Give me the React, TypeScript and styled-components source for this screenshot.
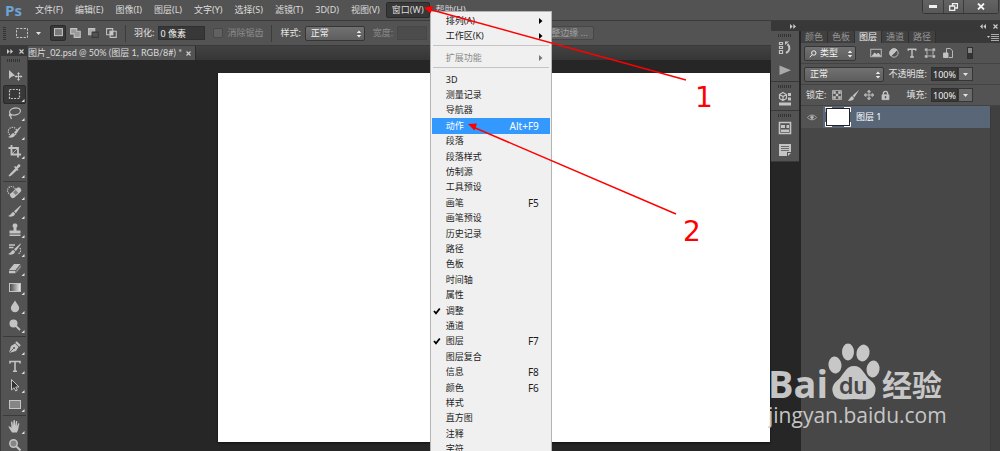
import React from "react";
import styled, { createGlobalStyle, css } from "styled-components";

const GlobalStyle = createGlobalStyle`
  * { box-sizing: border-box; }
  body { margin: 0; background: #262626; }
  button, input, select { font: inherit; color: inherit; margin: 0; }
`;

const App = styled.div`
  position: relative;
  display: flex;
  flex-direction: column;
  height: 100vh;
  overflow: hidden;
  background: #262626;
  color: #dcdcdc;
  font-family: "Noto Sans", "Noto Sans CJK SC", sans-serif;
  font-size: 9px;
  line-height: 14px;
`;

/* ---------- menu bar ---------- */

const MenuBar = styled.header`
  display: flex;
  align-items: center;
  flex: none;
  height: 21px;
  background: #535353;
  border-bottom: 1px solid #3c3c3c;
`;

const Brand = styled.span`
  width: 29px;
  padding-left: 5px;
  color: #6fa3d6;
  font: bold 15px/20px "Open Sans", sans-serif;
`;

const MenuSlot = styled.div`
  position: relative;
`;

const MenuTitle = styled.button<{ $open?: boolean }>`
  display: block;
  height: 16px;
  padding: 0 5px;
  border: 1px solid ${(p) => (p.$open ? "#2a2a2a" : "transparent")};
  border-radius: 2px;
  background: ${(p) => (p.$open ? "#383838" : "transparent")};
  white-space: nowrap;
`;

const WindowButtons = styled.div`
  display: flex;
  align-self: flex-start;
  margin-left: auto;
  margin-right: 1px;
  border: 1px solid #363636;
  border-top: 0;
  border-radius: 0 0 3px 3px;
`;

const WindowButton = styled.button<{ $wide?: boolean }>`
  display: grid;
  place-items: center;
  width: ${(p) => (p.$wide ? 35 : 20)}px;
  height: 13px;
  padding: 0;
  border: 0;
  border-left: 1px solid #3c3c3c;
  background: linear-gradient(#636363, #585858);
  &:first-child { border-left: 0; }
`;

/* ---------- drop-down menu ---------- */

const Dropdown = styled.div`
  position: absolute;
  z-index: 5;
  top: 9px;
  left: 44px;
  width: 122px;
  padding: 1px;
  border: 1px solid #b4b4b4;
  background: #f0f0f0;
  color: #1c1c1c;
`;

const MenuGroup = styled.ul<{ $fill?: boolean }>`
  display: grid;
  grid-auto-rows: ${(p) => (p.$fill ? "1fr" : "15px")};
  ${(p) => p.$fill && css`height: 385px;`}
  margin: 0;
  padding: 0;
  list-style: none;
`;

const MenuRule = styled.hr`
  height: 1px;
  margin: 2px 1px 4px;
  border: 0;
  background: #c4c4c4;
`;

const MenuEntry = styled.button<{ $active?: boolean; $disabled?: boolean }>`
  display: grid;
  grid-template-columns: 14px 1fr auto;
  align-items: center;
  width: 100%;
  height: 100%;
  padding: 0 11px 0 0;
  border: 0;
  background: ${(p) => (p.$active ? "#3399ff" : "transparent")};
  color: ${(p) => (p.$active ? "#fff" : p.$disabled ? "#8a8a8a" : "#1c1c1c")};
  line-height: 12px;
  text-align: left;
  white-space: nowrap;
`;

const Shortcut = styled.span`
  font-size: 10px;
`;

const SubmenuArrow = styled.svg`
  margin-right: -6px;
`;

/* ---------- body columns ---------- */

const Body = styled.div`
  display: flex;
  flex: 1;
  min-height: 0;
`;

const Column = styled.div`
  display: flex;
  flex: 1;
  flex-direction: column;
  min-width: 0;
`;

const OptionsBar = styled.div`
  display: flex;
  align-items: center;
  flex: none;
  height: 25px;
  padding-left: 3px;
  background: #535353;
  border-bottom: 1px solid #3a3a3a;
  white-space: nowrap;
`;

const Grip = styled.i<{ $flat?: boolean }>`
  flex: none;
  width: ${(p) => (p.$flat ? 14 : 3)}px;
  height: ${(p) => (p.$flat ? 3 : 14)}px;
  background: repeating-linear-gradient(${(p) => (p.$flat ? "90deg" : "0deg")}, #333 0 1px, #535353 1px 2px);
`;

const Divider = styled.i`
  width: 1px;
  height: 17px;
  margin: 0 8px;
  background: #3c3c3c;
`;

const CurrentTool = styled.button`
  display: flex;
  align-items: center;
  gap: 8px;
  width: 44px;
  padding: 0 0 0 10px;
  border: 0;
  background: none;
`;

const Gap = styled.span<{ $w: number }>`
  flex: none;
  width: ${(p) => p.$w}px;
`;

const Modes = styled.div`
  display: flex;
  width: 67px;
`;

const ModeButton = styled.button<{ $active?: boolean }>`
  display: grid;
  place-items: center;
  flex: none;
  width: ${(p) => (p.$active ? 16 : 18)}px;
  height: 16px;
  padding: 0;
  border: ${(p) => (p.$active ? "1px solid #2b2b2b" : "0")};
  border-radius: 2px;
  background: ${(p) => (p.$active ? "#383838" : "transparent")};
`;

const Label = styled.label<{ $dim?: boolean }>`
  display: flex;
  align-items: center;
  gap: 4px;
  color: ${(p) => (p.$dim ? "#8c8c8c" : "#e4e4e4")};
`;

const Field = styled.input<{ $w: number; $dim?: boolean }>`
  width: ${(p) => p.$w}px;
  height: 14px;
  padding: 0 1px;
  border: 1px solid ${(p) => (p.$dim ? "#474747" : "#303030")};
  background: ${(p) => (p.$dim ? "#4c4c4c" : "#383838")};
  color: #f0f0f0;
  line-height: 12px;
`;

const Tick = styled.input`
  appearance: none;
  width: 10px;
  height: 10px;
  border: 1px solid #484848;
  border-radius: 2px;
  background: #616161;
`;

const PickerBox = styled.span<{ $w: number }>`
  position: relative;
  display: flex;
  width: ${(p) => p.$w}px;
  height: 15px;
`;

const PickerSelect = styled.select<{ $inset: number }>`
  appearance: none;
  width: 100%;
  padding: 0 0 0 ${(p) => p.$inset}px;
  border: 1px solid #363636;
  border-radius: 2px;
  background: linear-gradient(#717171, #5e5e5e);
  color: #f2f2f2;
  line-height: 12px;
`;

const PickerMark = styled.svg<{ $start?: boolean }>`
  position: absolute;
  top: 4px;
  ${(p) => (p.$start ? "left: 5px;" : "right: 3px;")}
  pointer-events: none;
`;

const PlainButton = styled.button`
  height: 14px;
  margin-left: 109px;
  padding: 0 5px;
  border: 1px solid #474747;
  border-radius: 2px;
  background: #5e5e5e;
  color: #a0a0a0;
  line-height: 12px;
`;

const Main = styled.div`
  display: flex;
  flex: 1;
  min-height: 0;
`;

const ToolPanel = styled.aside`
  display: flex;
  flex-direction: column;
  align-items: center;
  flex: none;
  width: 28px;
  overflow: hidden;
  background: #535353;
  border-left: 1px solid #3a3a3a;
  border-right: 1px solid #3a3a3a;
`;

const ToolHeader = styled.div`
  display: flex;
  align-items: center;
  justify-content: space-between;
  align-self: stretch;
  flex: none;
  height: 10px;
  margin-bottom: 3px;
  padding: 0 3px 0 6px;
  background: #383838;
`;

const ToolList = styled.div`
  display: flex;
  flex-direction: column;
  margin-top: 4px;
`;

const ToolButton = styled.button<{ $active?: boolean }>`
  display: grid;
  place-items: center;
  flex: none;
  width: 23px;
  height: 19px;
  padding: 0;
  border: 1px solid ${(p) => (p.$active ? "#2b2b2b" : "transparent")};
  border-radius: 2px;
  background: ${(p) => (p.$active ? "#383838" : "transparent")};
`;

const ToolRule = styled.i`
  height: 1px;
  margin: 1px 0;
  background: #3a3a3a;
`;

const DocumentArea = styled.main`
  display: flex;
  flex: 1;
  flex-direction: column;
  min-width: 0;
`;

const TabStrip = styled.div`
  display: flex;
  flex: none;
  height: 14px;
  background: linear-gradient(#424242, #363636);
`;

const DocumentTab = styled.div`
  display: flex;
  align-items: center;
  gap: 4px;
  padding-right: 4px;
  background: #535353;
  border-right: 1px solid #2c2c2c;
  font-family: Lato, "Noto Sans CJK SC", sans-serif;
  white-space: nowrap;
`;

const CloseButton = styled.button`
  display: grid;
  place-items: center;
  padding: 0;
  border: 0;
  background: none;
`;

const Workspace = styled.div`
  display: flex;
  flex: 1;
  padding: 13px 1px 9px 190px;
`;

const Canvas = styled.div`
  flex: 1;
  background: #fff;
  box-shadow: 0 1px 2px #111;
`;

/* ---------- right dock ---------- */

const Dock = styled.aside`
  display: flex;
  flex-direction: column;
  flex: none;
  width: 229px;
`;

const DockHeader = styled.div`
  display: flex;
  align-items: center;
  gap: 7px;
  flex: none;
  height: 10px;
  padding: 0 2px 0 19px;
  background: #383838;
`;

const Spacer = styled.span`
  flex: 1;
`;

const DockBody = styled.div`
  display: flex;
  flex: 1;
  gap: 2px;
  min-height: 0;
`;

const IconStrip = styled.div`
  align-self: flex-start;
  width: 28px;
  background: #535353;
`;

const IconGroup = styled.div`
  display: flex;
  flex-direction: column;
  align-items: center;
  padding-top: 3px;
  border-bottom: 1px solid #383838;
`;

const StripButton = styled.button`
  display: grid;
  place-items: center;
  width: 24px;
  height: 22px;
  padding: 0;
  border: 0;
  background: none;
`;

const Panel = styled.section`
  display: flex;
  flex: 1;
  flex-direction: column;
  min-width: 0;
  background: #535353;
`;

const PanelTabs = styled.div`
  display: flex;
  align-items: stretch;
  flex: none;
  height: 12px;
  background: #393939;
`;

const PanelTab = styled.button<{ $active?: boolean }>`
  width: 27px;
  padding: 0;
  border: 0;
  border-right: 1px solid #303030;
  background: ${(p) => (p.$active ? "#535353" : "#404040")};
  color: ${(p) => (p.$active ? "#f0f0f0" : "#969696")};
  line-height: 12px;
`;

const PanelRow = styled.div`
  display: flex;
  align-items: center;
  flex: none;
  height: 21px;
  padding-left: 3px;
  border-bottom: 1px solid #434343;
  white-space: nowrap;
`;

const FilterIcons = styled.div`
  display: flex;
  gap: 4px;
  margin-left: 13px;
`;

const LockIcons = styled.div`
  display: flex;
  gap: 2px;
  margin-left: 4px;
`;

const IconButton = styled.button`
  display: grid;
  place-items: center;
  width: 14px;
  height: 14px;
  padding: 0;
  border: 0;
  background: none;
`;

const MenuButton = styled(IconButton)`
  height: 12px;
`;

const Toggle = styled.input`
  appearance: none;
  width: 6px;
  height: 12px;
  margin: 0 0 0 12px;
  border: 1px solid #303030;
  background: linear-gradient(#888 0 50%, #333 50%);
`;

const Percent = styled.div`
  display: flex;
  margin-left: auto;
  margin-right: 27px;
`;

const PercentDrop = styled.button`
  display: grid;
  place-items: center;
  width: 15px;
  height: 14px;
  padding: 0;
  border: 1px solid #363636;
  background: #6a6a6a;
`;

const LockLabel = styled.span`
  padding-left: 2px;
  color: #e4e4e4;
`;

const LayerWell = styled.div`
  display: flex;
  flex: 1;
  background: #404040;
`;

const LayerArea = styled.div`
  flex: 1;
  margin-right: 9px;
  border-right: 1px solid #3a3a3a;
  background: #474747;
`;

const LayerRow = styled.div`
  display: flex;
  align-items: center;
  height: 22px;
  background: #596678;
  color: #fff;
`;

const EyeButton = styled.button`
  display: grid;
  place-items: center;
  align-self: stretch;
  width: 22px;
  padding: 0;
  border: 0;
  background: #535353;
`;

const Thumb = styled.svg`
  margin: 0 5px 0 2px;
`;

/* ---------- overlays ---------- */

const Annotations = styled.svg`
  position: absolute;
  z-index: 10;
  top: 0;
  left: 0;
  pointer-events: none;
`;

const Watermark = styled.svg`
  position: absolute;
  z-index: 9;
  right: 52px;
  bottom: 16px;
  pointer-events: none;
`;

/* ---------- icons ---------- */

const C = "#c4c4c4";

const Glyph = ({ children, size = 16 }: { children: React.ReactNode; size?: number }) => (
  <svg width={size} height={size} viewBox="0 0 16 16" fill="none" stroke={C} strokeWidth="1.2">
    {children}
  </svg>
);

const Cross = () => (
  <svg width="5" height="5" viewBox="0 0 5 5" stroke="#d0d0d0" strokeWidth="1.1">
    <path d="M.5.5l4 4M4.5.5l-4 4" />
  </svg>
);

const Chevrons = ({ left = false }: { left?: boolean }) => (
  <svg width="6" height="5" viewBox="0 0 6 5" fill="#c8c8c8">
    {left ? <path d="M2.7 0v5L0 2.5zM6 0v5L3.3 2.5z" /> : <path d="M0 0v5l2.7-2.5zM3.3 0v5L6 2.5z" />}
  </svg>
);

const Down = () => (
  <svg width="5" height="3" viewBox="0 0 5 3" fill="#e4e4e4">
    <path d="M0 0h5L2.5 3z" />
  </svg>
);

const Tool = ({ label, active, plain, children }: { label: string; active?: boolean; plain?: boolean; children: React.ReactNode }) => (
  <ToolButton $active={active} aria-label={label}>
    <svg width="21" height="17" viewBox="0 0 21 17" fill="none" stroke={C} strokeWidth="1.2">
      {children}
      {!plain && <path d="M20.5 13v3h-3z" fill="#e0e0e0" stroke="none" />}
    </svg>
  </ToolButton>
);

const brush = <path d="M16.5 2.5L10 8.3l1.8 1.900L17 3zM9.400 8.900c-2 .2-2 3-5.400 4.100 3.500 1.500 7 .2 7-2.400z" fill={C} stroke="none" />;

const Picker = ({ w, value, label, search }: { w: number; value: string; label: string; search?: boolean }) => (
  <PickerBox $w={w}>
    <PickerSelect $inset={search ? 15 : 5} aria-label={label} defaultValue={value}>
      <option>{value}</option>
    </PickerSelect>
    <PickerMark width="6" height="8" viewBox="0 0 6 8" fill="#eee">
      <path d="M3 .5L5.200 3H.8zM3 7.500L5.200 5H.8z" />
    </PickerMark>
    {search && (
      <PickerMark $start width="8" height="8" viewBox="0 0 8 8" fill="none" stroke="#eee">
        <circle cx="4.800" cy="3" r="2.200" />
        <path d="M3.200 4.700L.8 7.300" />
      </PickerMark>
    )}
  </PickerBox>
);

const menus = ["文件(F)", "编辑(E)", "图像(I)", "图层(L)", "文字(Y)", "选择(S)", "滤镜(T)", "3D(D)", "视图(V)"];

const panels: { name: string; keys?: string; checked?: boolean; active?: boolean }[] = [
  { name: "3D" },
  { name: "测量记录" },
  { name: "导航器" },
  { name: "动作", keys: "Alt+F9", active: true },
  { name: "段落" },
  { name: "段落样式" },
  { name: "仿制源" },
  { name: "工具预设" },
  { name: "画笔", keys: "F5" },
  { name: "画笔预设" },
  { name: "历史记录" },
  { name: "路径" },
  { name: "色板" },
  { name: "时间轴" },
  { name: "属性" },
  { name: "调整", checked: true },
  { name: "通道" },
  { name: "图层", keys: "F7", checked: true },
  { name: "图层复合" },
  { name: "信息", keys: "F8" },
  { name: "颜色", keys: "F6" },
  { name: "样式" },
  { name: "直方图" },
  { name: "注释" },
  { name: "字符" },
];

const Sub = ({ name, disabled }: { name: string; disabled?: boolean }) => (
  <li>
    <MenuEntry $disabled={disabled}>
      <span />
      <span>{name}</span>
      <SubmenuArrow width="4" height="6" viewBox="0 0 4 6" fill={disabled ? "#777" : "#000"}>
        <path d="M0 0l3.500 3L0 6z" />
      </SubmenuArrow>
    </MenuEntry>
  </li>
);

const WindowMenu = () => (
  <Dropdown>
    <MenuGroup>
      <Sub name="排列(A)" />
      <Sub name="工作区(K)" />
    </MenuGroup>
    <MenuRule />
    <MenuGroup>
      <Sub name="扩展功能" disabled />
    </MenuGroup>
    <MenuRule />
    <MenuGroup $fill>
      {panels.map((p) => (
        <li key={p.name}>
          <MenuEntry $active={p.active}>
            {p.checked ? (
              <svg width="9" height="8" viewBox="0 0 9 8" fill="none" stroke="#000" strokeWidth="1.8">
                <path d="M2 4l2 2.300L7.800 1.500" />
              </svg>
            ) : (
              <span />
            )}
            <span>{p.name}</span>
            <Shortcut>{p.keys}</Shortcut>
          </MenuEntry>
        </li>
      ))}
    </MenuGroup>
  </Dropdown>
);

const Tools = () => (
  <ToolPanel>
    <ToolHeader>
      <Chevrons />
      <CloseButton aria-label="关闭工具"><Cross /></CloseButton>
    </ToolHeader>
    <Grip $flat />
    <ToolList>
      <Tool label="移动" plain>
        <path d="M5 3v9l2.400-2.300L11 8.500z" fill={C} stroke="none" />
        <path d="M14.500 6v7M11 9.500h7" />
        <path d="M14.500 5l1.500 2h-3zM14.500 14l1.500-2h-3zM10.500 9.500l2-1.500v3zM18.500 9.500l-2-1.500v3z" fill={C} stroke="none" />
      </Tool>
      <Tool label="选框" active>
        <rect x="5.500" y="3.500" width="10" height="9" strokeDasharray="2 1.200" />
      </Tool>
      <Tool label="套索">
        <ellipse cx="11" cy="6.500" rx="5.500" ry="3.500" transform="rotate(-12 11 6.500)" />
        <path d="M6.500 9c-2 .5-1 2.600.3 2 1.200-.6-.2-2-1-1.200M6.500 11.500l1 2.500" />
      </Tool>
      <Tool label="快速选择">
        <circle cx="8.500" cy="7.500" r="4.200" strokeDasharray="1.300 1" />
        {brush}
      </Tool>
      <Tool label="裁剪">
        <path d="M7.500 2v9.500H17M4.500 5h9.500v9.500" strokeWidth="1.800" />
        <path d="M8 11l6-6" strokeWidth=".8" />
      </Tool>
      <Tool label="吸管">
        <path d="M12 6.500l-5.500 5.500L5 14l2-1 5.800-5.500" strokeWidth="1.100" />
        <path d="M10 5l1-1 1.300 1 1.700-2.300c1.300-1.300 3.300.6 2 2L13.500 6.500l1 1.300-1 1z" fill={C} stroke="none" />
      </Tool>
      <ToolRule />
      <Tool label="修复画笔">
        <circle cx="7.500" cy="6.500" r="4" strokeDasharray="1.200 1" />
        <rect x="5" y="6" width="13" height="5.500" rx="2.500" transform="rotate(-42 11.500 8.500)" fill={C} stroke="none" />
        <rect x="9.800" y="6.800" width="3.600" height="3.600" transform="rotate(-42 11.500 8.500)" fill="#808080" stroke="none" />
      </Tool>
      <Tool label="画笔">{brush}</Tool>
      <Tool label="仿制图章">
        <path d="M11 1.500a2.200 2.200 0 0 1 1.500 4v3h4v3h-11v-3h4v-3a2.200 2.200 0 0 1 1.500-4zM5.500 12.500h11V14h-11z" fill={C} stroke="none" />
      </Tool>
      <Tool label="历史记录画笔">
        {brush}
        <path d="M5 4h6M5 6.500h4.500" strokeWidth="1.500" />
        <path d="M16 7c1.500 3 0 5.500-2.500 6" strokeDasharray="1.500 1" />
      </Tool>
      <Tool label="橡皮擦">
        <path d="M5 10l5-6h6.500l-5 6zM5 10.800h6.500v2.400H5z" fill={C} stroke="none" />
        <path d="M12.300 10.300l4.500-5.400v2.700l-4.500 5.400z" fill="#8d8d8d" stroke="none" />
      </Tool>
      <Tool label="渐变">
        <defs>
          <linearGradient id="fade"><stop stopColor="#444" /><stop offset="1" stopColor="#eee" /></linearGradient>
        </defs>
        <rect x="5.500" y="4.500" width="11" height="8" fill="url(#fade)" strokeWidth="1" />
      </Tool>
      <Tool label="模糊">
        <path d="M11 2.500c1.500 3 4.200 5 4.200 7.600a4.200 4.200 0 0 1-8.400 0C6.800 7.500 9.500 5.500 11 2.500z" fill={C} stroke="none" />
      </Tool>
      <Tool label="减淡">
        <circle cx="9.500" cy="6.500" r="4" fill={C} stroke="none" />
        <path d="M12 9l4 4" strokeWidth="1.800" />
      </Tool>
      <ToolRule />
      <Tool label="钢笔">
        <path d="M5 14l2-7 4-2.500 3.500 3.500L12 12z" fill={C} stroke="none" />
        <path d="M5 14l4.500-4.500" stroke="#555" strokeWidth=".9" />
        <circle cx="10" cy="9" r="1" fill="#555" stroke="none" />
        <path d="M12 3l4 4" strokeWidth="2.200" />
      </Tool>
      <Tool label="文字">
        <path d="M6 5.500V3.500h10v2M11 3.500v9.500M9 13.200h4" strokeWidth="1.600" />
      </Tool>
      <Tool label="路径选择">
        <path d="M7.500 2.500v10.500l2.500-2.300 1.700 3.300 1.600-.8-1.600-3.200h3.300z" fill="#333" strokeWidth="1" />
      </Tool>
      <Tool label="矩形">
        <rect x="5.500" y="4.500" width="11" height="8" fill="#858585" strokeWidth="1" />
      </Tool>
      <ToolRule />
      <Tool label="抓手">
        <path d="M8 14.500C6.500 12 5 10 4.500 8.500c.8-.8 1.800.3 3 1.500L7 4c.8-1 1.400-.2 1.500.5L9 8l.5-5.500c.7-1 1.400-.4 1.500.3V8l1-4.800c.8-.7 1.400 0 1.300.6l-.5 4.700 1.400-3c.8-.5 1.400.1 1.100.8-.7 2-.8 5.600-2.300 8.200z" fill={C} stroke="none" />
      </Tool>
      <Tool label="缩放" plain>
        <circle cx="9.500" cy="6.500" r="3.700" fill="#858585" strokeWidth="1.500" />
        <path d="M12.500 9.500l4 4" strokeWidth="2" />
      </Tool>
    </ToolList>
  </ToolPanel>
);

const ToolOptions = () => (
  <OptionsBar>
    <Grip />
    <CurrentTool aria-label="选框工具">
      <svg width="12" height="10" viewBox="0 0 12 10" fill="none" stroke={C}>
        <rect x=".5" y=".5" width="11" height="9" strokeDasharray="2.300 1.300" />
      </svg>
      <Down />
    </CurrentTool>
    <Modes>
      <ModeButton $active aria-label="新选区">
        <Glyph size={14}><rect x="4" y="3" width="9" height="8" fill="#777" /></Glyph>
      </ModeButton>
      <ModeButton aria-label="添加到选区">
        <Glyph size={14}><path d="M3 3h7v3h4v7H7V9H3z" fill="#9a9a9a" /></Glyph>
      </ModeButton>
      <ModeButton aria-label="从选区减去">
        <Glyph size={14}><path d="M3 10V3h7v3H6v4z" fill="#aaa" /><path d="M7 7h7v6H7z" stroke="#3a3a3a" /></Glyph>
      </ModeButton>
      <ModeButton aria-label="与选区交叉">
        <Glyph size={14}><path d="M3 3h7v7H3zM7 6h7v7H7z" /><path d="M7 6h3v4H7z" fill="#ccc" /></Glyph>
      </ModeButton>
    </Modes>
    <Divider />
    <Label>羽化:<Field $w={47} defaultValue="0 像素" /></Label>
    <Gap $w={8} />
    <Label $dim><Tick type="checkbox" />消除锯齿</Label>
    <Divider />
    <Label as="span">样式:<Picker w={60} value="正常" label="样式" /></Label>
    <Gap $w={8} />
    <Label $dim>宽度:<Field $w={30} $dim /></Label>
    <PlainButton>调整边缘 ...</PlainButton>
  </OptionsBar>
);

const LayersPanel = () => (
  <Panel>
    <PanelTabs>
      <PanelTab>颜色</PanelTab>
      <PanelTab>色板</PanelTab>
      <PanelTab $active>图层</PanelTab>
      <PanelTab>通道</PanelTab>
      <PanelTab>路径</PanelTab>
      <Spacer />
      <MenuButton aria-label="面板菜单">
        <svg width="12" height="7" viewBox="0 0 12 7" stroke="#aaa">
          <path d="M4 .5h8M4 2.500h8M4 4.500h8M4 6.500h8" />
          <path d="M0 2h3L1.500 4z" fill="#ccc" stroke="none" />
        </svg>
      </MenuButton>
    </PanelTabs>
    <PanelRow>
      <Picker w={52} value="类型" label="滤镜类型" search />
      <FilterIcons>
        <IconButton aria-label="像素图层"><Glyph size={12}><rect x="1" y="3" width="14" height="10" /><path d="M3 12l3-4 3 2 2-2 3 4z" fill={C} /></Glyph></IconButton>
        <IconButton aria-label="调整图层"><Glyph size={12}><circle cx="8" cy="8" r="5.500" /><path d="M4 12A5.500 5.500 0 0 1 12 4z" fill={C} /></Glyph></IconButton>
        <IconButton aria-label="文字图层"><Glyph size={12}><path d="M3 5V3h10v2M8 3v10M5.500 13.300h5" strokeWidth="1.900" /></Glyph></IconButton>
        <IconButton aria-label="形状图层"><Glyph size={12}><path d="M4 4h8v8H4z" /><path d="M1 1.500h4v4H1zM11 1.500h4v4h-4zM1 10.500h4v4H1zM11 10.500h4v4h-4z" fill={C} stroke="#535353" strokeWidth=".6" /></Glyph></IconButton>
        <IconButton aria-label="智能对象"><Glyph size={12}><path d="M6 9V2h5l3 3v9H9" /><path d="M2 8h6v6H2z" fill={C} /></Glyph></IconButton>
      </FilterIcons>
      <Toggle type="checkbox" aria-label="图层过滤" />
    </PanelRow>
    <PanelRow>
      <Picker w={80} value="正常" label="混合模式" />
      <Percent>
        <Label>不透明度:<Field $w={27} defaultValue="100%" /></Label>
        <PercentDrop aria-label="不透明度滑块"><Down /></PercentDrop>
      </Percent>
    </PanelRow>
    <PanelRow>
      <LockLabel>锁定:</LockLabel>
      <LockIcons>
        <IconButton aria-label="锁定透明像素"><Glyph size={10}><rect x="1" y="1" width="14" height="14" /><path d="M2 2h4v4H2zM10 2h4v4h-4zM6 6h4v4H6zM2 10h4v4H2zM10 10h4v4h-4z" fill={C} stroke="none" /></Glyph></IconButton>
        <IconButton aria-label="锁定图像像素"><Glyph size={13}><path d="M15 1L7 8l2 2.500zM6.500 9C4 9 4 12.500 1 14c4 1 7.500 0 7.500-3z" fill={C} stroke="none" /></Glyph></IconButton>
        <IconButton aria-label="锁定位置"><Glyph size={12}><path d="M8 2v12M2 8h12M6 4l2-2.500L10 4zM6 12l2 2.500 2-2.500zM4 6L1.500 8 4 10zM12 6l2.500 2-2.500 2z" /></Glyph></IconButton>
        <IconButton aria-label="全部锁定"><Glyph size={11}><path d="M5 7V5a3 3 0 0 1 6 0v2" strokeWidth="2" /><path d="M3 7h10v7H3z" fill={C} /><path d="M8 9v3" stroke="#444" strokeWidth="2" /></Glyph></IconButton>
      </LockIcons>
      <Percent>
        <Label>填充:<Field $w={27} defaultValue="100%" /></Label>
        <PercentDrop aria-label="填充滑块"><Down /></PercentDrop>
      </Percent>
    </PanelRow>
    <LayerWell>
      <LayerArea>
        <LayerRow>
          <EyeButton aria-label="图层可见性">
            <svg width="10" height="7" viewBox="0 0 10 7" fill="none" stroke="#aaa">
              <path d="M.5 3.500C2.500.3 7.500.3 9.500 3.500c-2 3-7 3-9 0z" />
              <circle cx="5" cy="3.300" r="1.300" fill="#bbb" />
            </svg>
          </EyeButton>
          <Thumb width="26" height="20" viewBox="0 0 26 20" fill="none">
            <rect x="1.500" y="1.500" width="23" height="17" fill="#fff" stroke="#222" />
            <path d="M0 5V.5h7M19 .5h6.500V5M25.500 15v4.500H19M7 19.500H.5V15" stroke="#fff" />
          </Thumb>
          图层 1
        </LayerRow>
      </LayerArea>
    </LayerWell>
  </Panel>
);

const RightDock = () => (
  <Dock>
    <DockHeader>
      <Chevrons />
      <Spacer />
      <Chevrons left />
      <CloseButton aria-label="关闭面板"><Cross /></CloseButton>
    </DockHeader>
    <DockBody>
      <IconStrip>
        <IconGroup>
          <Grip $flat />
          <StripButton aria-label="历史记录">
            <Glyph><path d="M2.500 2.500h3v2h-3zM2.500 6.500h3v2h-3zM2.500 10.500h3v3h-3z" /><path d="M9 13c4-2 4.500-6 1.500-9" strokeWidth="2" /><path d="M8 5V1.500h4z" fill={C} stroke="none" /></Glyph>
          </StripButton>
          <StripButton aria-label="动作"><Glyph><path d="M2.500 3.500v9.500L14 8.200z" fill="#aaa" stroke="none" /></Glyph></StripButton>
        </IconGroup>
        <IconGroup>
          <Grip $flat />
          <StripButton aria-label="属性">
            <Glyph><path d="M6 1.500l3.500 2v4L6 9.500l-3.500-2v-4zM2.500 3.500L6 5.500l3.500-2M6 5.500v4" /><path d="M11 2h3v3h-3zM11 6.500h3v3h-3zM2 11.500h12v3H2z" fill={C} stroke="none" /></Glyph>
          </StripButton>
        </IconGroup>
        <IconGroup>
          <Grip $flat />
          <StripButton aria-label="信息">
            <Glyph><path d="M2.500 2.500h11v11h-11z" strokeWidth="1.600" /><path d="M4 5h4v3H4zM9.500 5H12v3H9.500zM4 9.500h8V12H4z" fill={C} stroke="none" /></Glyph>
          </StripButton>
          <StripButton aria-label="注释">
            <Glyph><path d="M2 2h12v8h-4v4H2z" fill={C} stroke="none" /><path d="M11 11h3l-3 3z" fill={C} stroke="none" /><path d="M4 4.500h8M4 6.500h8M4 8.500h8" stroke="#555" strokeWidth=".8" /></Glyph>
          </StripButton>
        </IconGroup>
      </IconStrip>
      <LayersPanel />
    </DockBody>
  </Dock>
);

export default function Editor() {
  return (
    <App>
      <GlobalStyle />
      <MenuBar>
        <Brand>Ps</Brand>
        {menus.map((m) => (
          <MenuTitle key={m}>{m}</MenuTitle>
        ))}
        <MenuSlot>
          <MenuTitle $open>窗口(W)</MenuTitle>
          <WindowMenu />
        </MenuSlot>
        <MenuTitle>帮助(H)</MenuTitle>
        <WindowButtons>
          <WindowButton aria-label="最小化">
            <svg width="8" height="3" viewBox="0 0 8 3"><path d="M0 0h8v3H0z" fill="#f0f0f0" /></svg>
          </WindowButton>
          <WindowButton aria-label="还原">
            <svg width="9" height="8" viewBox="0 0 9 8" fill="none" stroke="#f0f0f0" strokeWidth="1.300"><path d="M3.500 2.500v-2h5v4.500h-2M.7 3h5v4.300h-5z" /></svg>
          </WindowButton>
          <WindowButton $wide aria-label="关闭">
            <svg width="8" height="7" viewBox="0 0 8 7" stroke="#f4f4f4" strokeWidth="1.800"><path d="M1 .5l6 6M7 .5l-6 6" /></svg>
          </WindowButton>
        </WindowButtons>
      </MenuBar>
      <Body>
        <Column>
          <ToolOptions />
          <Main>
            <Tools />
            <DocumentArea>
              <TabStrip>
                <DocumentTab>
                  图片_02.psd @ 50% (图层 1, RGB/8#) *
                  <CloseButton aria-label="关闭文档"><Cross /></CloseButton>
                </DocumentTab>
              </TabStrip>
              <Workspace><Canvas /></Workspace>
            </DocumentArea>
          </Main>
        </Column>
        <RightDock />
      </Body>
      <Watermark width="180" height="94" viewBox="0 0 180 94" fill="#d2d2d2" opacity=".92">
        <text x="0" y="57" fontFamily="Open Sans, sans-serif" fontWeight="700" fontSize="38">Bai</text>
        <ellipse cx="67" cy="24" rx="6.500" ry="8.500" transform="rotate(-8 67 24)" />
        <ellipse cx="80" cy="11" rx="6" ry="8.500" />
        <ellipse cx="95" cy="12" rx="6.500" ry="8.500" transform="rotate(12 95 12)" />
        <ellipse cx="105" cy="28" rx="6.500" ry="8.500" transform="rotate(8 105 28)" />
        <path d="M86 25c8 0 10 8 15 13 5 4 8 8 6 14-2 7-9 7-21 6-12 1-19 1-21-6-2-6 1-10 6-14 5-5 7-13 15-13z" />
        <text x="71" y="53" fontFamily="Inter, sans-serif" fontWeight="600" fontSize="23" fill="#474747">du</text>
        <text x="114" y="55" fontFamily="Noto Sans CJK SC, sans-serif" fontWeight="700" fontSize="30">经验</text>
        <text x="0" y="82" fontFamily="Open Sans, sans-serif" fontSize="21">jingyan.baidu.com</text>
      </Watermark>
      <Annotations width="720" height="260" viewBox="0 0 720 260" fill="#f00" stroke="none">
        <path d="M686 80L430 9.500M676 214L473 127" stroke="#f00" strokeWidth="1.500" />
        <path d="M424 7.500l9-1.500-2.500 7.500zM468 124l9-.5-2.500 7z" />
        <text x="695" y="107" fontFamily="DejaVu Sans, sans-serif" fontSize="28">1</text>
        <text x="683" y="241" fontFamily="DejaVu Sans, sans-serif" fontSize="28">2</text>
      </Annotations>
    </App>
  );
}
